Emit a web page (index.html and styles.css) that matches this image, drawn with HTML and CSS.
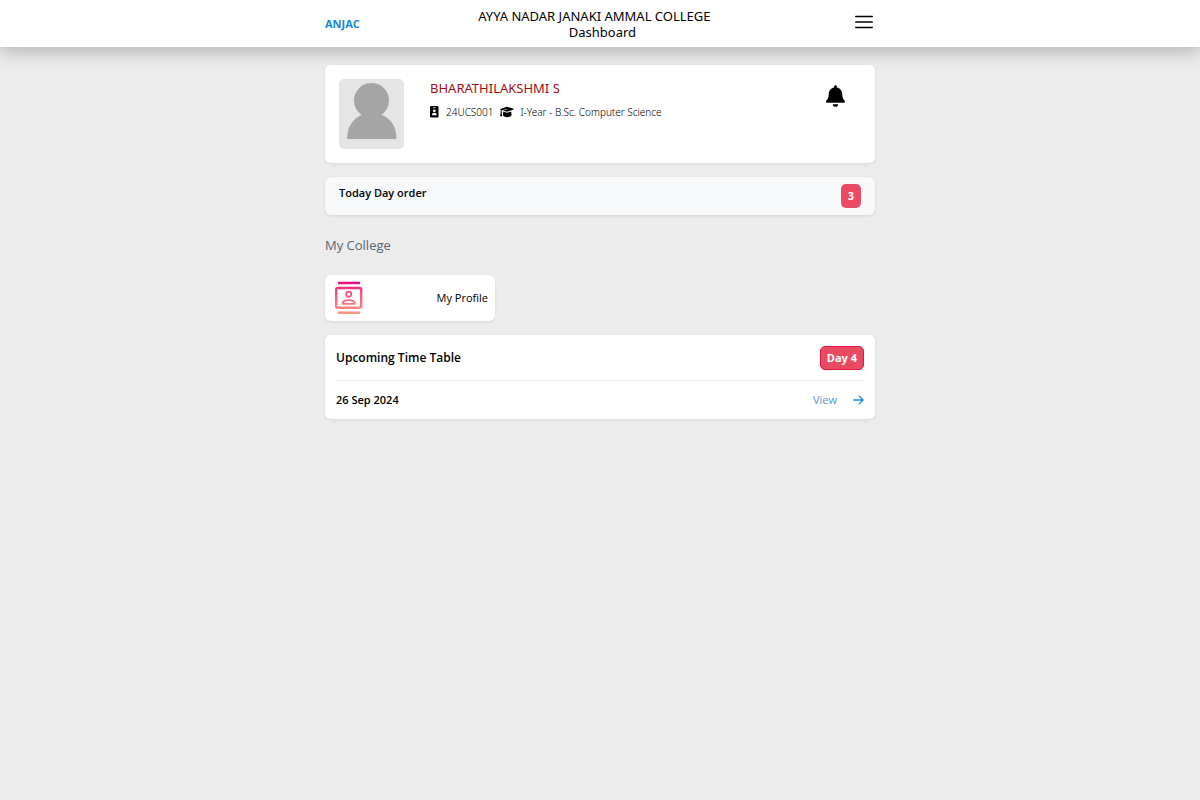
FILE: index.html
```
<!DOCTYPE html>
<html lang="en">
<head>
	<title>ANJAC - Dashboard</title>
	<meta charset="utf-8">
	<meta name="viewport" content="width=device-width, initial-scale=1">
	<link rel="stylesheet" href="styles.css">
</head>

<body>
	<header class="topbar">
		<div class="container topbar-inner">
			<a class="brand" href="#">ANJAC</a>
			<div class="title">
				<span class="college">AYYA NADAR JANAKI AMMAL COLLEGE</span>
				<span class="page">Dashboard</span>
			</div>
			<button class="icon-btn menu-btn" type="button" aria-label="Menu">
				<svg width="18" height="14" viewBox="0 0 18 14" stroke="#000" stroke-width="1.4" stroke-linecap="round">
					<path d="M.7 1.5h16.6M.7 7h16.6M.7 12.5h16.6"/>
				</svg>
			</button>
		</div>
	</header>

	<main class="container main">
		<section class="card profile">
			<svg class="avatar" width="65" height="70" viewBox="0 0 65 70">
				<rect width="65" height="70" rx="5" fill="#e5e5e5"/>
				<circle cx="32.5" cy="21.5" r="17.5" fill="#a5a5a5"/>
				<path d="M8 60C8 46 16 38 24 35.500h17.500C50 38 57.500 46 57.500 60z" fill="#a5a5a5"/>
			</svg>
			<div class="student">
				<h1 class="name">BHARATHILAKSHMI S</h1>
				<div class="meta">
					<svg width="9" height="12" viewBox="0 0 9 12">
						<rect width="8.500" height="11.500" rx="1.300"/>
						<path d="M3 1.700h2.600" stroke="#fff" stroke-width=".8"/>
						<circle cx="4.300" cy="4.800" r="1.400" fill="#fff"/>
						<path d="M1.800 9.200c0-3.300 5-3.300 5 0z" fill="#fff"/>
					</svg>
					<span class="regno">24UCS001</span>
					<svg class="cap" width="14" height="12" viewBox="0 0 14 12">
						<path d="M7 .8L13.500 2.800c.4.200.4.600 0 .8L8 5.500c-.7.200-1.300.200-2 0L3 4.600l3.800-1-.1-.5-4.600 1.200c-.4.300-.6.700-.6 1.200.5.400.5.900.1 1.200l.6 3c0 .3-.1.500-.4.500H.5c-.3 0-.4-.2-.4-.5l.6-3c-.4-.3-.4-.8 0-1.100 0-.5.100-.9.400-1.300L.4 3.700c-.5-.2-.5-.6 0-.8z"/>
						<path d="M3.200 5.600l2.700.8c.8.200 1.500.2 2.300 0l3-.9.400 3.600c0 1.300-2 2.100-4.300 2.100s-4.300-.8-4.300-2.100z"/>
					</svg>
					<span>I-Year - B.Sc. Computer Science</span>
				</div>
			</div>
			<button class="icon-btn bell" type="button" aria-label="Notifications">
				<svg width="19" height="22" viewBox="0 0 448 512">
					<path d="M224 512c35.300 0 63.900-28.600 63.900-64H160c0 35.400 28.600 64 64 64zm215.400-149.700c-19.300-20.800-55.500-52-55.500-154.300 0-77.700-54.500-139.900-127.900-155.200V32c0-17.700-14.300-32-32-32s-32 14.300-32 32v20.800C118.600 68.100 64.100 130.300 64.100 208c0 102.300-36.200 133.500-55.500 154.300C2.600 368.700 0 376.400 0 384c.1 16.400 13 32 32.100 32h383.800c19.100 0 32-15.600 32.100-32 0-7.600-2.700-15.300-8.600-21.700z"/>
					<path d="M145 432h158" stroke="#fff" stroke-width="24"/>
				</svg>
			</button>
		</section>

		<section class="card day-order">
			<span class="day-label">Today Day order</span>
			<span class="badge">3</span>
		</section>

		<h2 class="section-title">My College</h2>

		<a class="card tile" href="#">
			<svg width="28" height="34" viewBox="0 0 28 34" fill="none" stroke="url(#pink)" stroke-width="2">
				<defs>
					<linearGradient id="pink" gradientUnits="userSpaceOnUse" x1="0" y1="0" x2="0" y2="34">
						<stop offset="0" stop-color="#e9007f"/>
						<stop offset=".28" stop-color="#fb4380"/>
						<stop offset="1" stop-color="#ff9a84"/>
					</linearGradient>
				</defs>
				<path d="M3 .8h22v2.400H3zM3 30.600h22V33H3z" fill="url(#pink)" stroke="none"/>
				<rect x="1.200" y="7" width="25" height="19.800" rx="1.500" stroke-width="2.400"/>
				<circle cx="13.700" cy="13.300" r="2.600" stroke-width="1.700"/>
				<path d="M7.500 22.800c0-5 12.400-5 12.400 0z" stroke-width="1.700" stroke-linejoin="round"/>
			</svg>
			<span>My Profile</span>
		</a>

		<section class="card timetable">
			<div class="row heading">
				<h2 class="tt-title">Upcoming Time Table</h2>
				<span class="badge badge-day">Day 4</span>
			</div>
			<div class="row">
				<span class="date">26 Sep 2024</span>
				<a class="view" href="#">View
					<svg width="11" height="10" viewBox="0 0 11 10" fill="none" stroke="#1488d8" stroke-width="1.300" stroke-linecap="round" stroke-linejoin="round">
						<path d="M.8 5h9.200M6 .9L10.100 5 6 9.100"/>
					</svg>
				</a>
			</div>
		</section>
	</main>
</body>

</html>
```
FILE: styles.css
```
body {
	margin: 0;
	background: #ececec;
	color: #000;
	font-family: "Noto Sans", "Open Sans", sans-serif;
	font-size: 11px;
	line-height: 16px;
}

a {
	text-decoration: none;
}

h1, h2 {
	margin: 0;
}

svg {
	display: block;
	flex: none;
}

.container {
	box-sizing: border-box;
	width: 100%;
	max-width: 550px;
	margin: 0 auto;
}

.topbar {
	background: #fff;
	box-shadow: 0 6px 16px rgba(0, 0, 0, .22);
}

.topbar-inner {
	display: flex;
	align-items: center;
	min-height: 47px;
}

.brand {
	color: #1488d8;
	font-family: "Open Sans", "Noto Sans", sans-serif;
	font-weight: 700;
}

.title {
	display: flex;
	flex: 1;
	flex-direction: column;
	padding-right: 10px;
	font-size: 13px;
	text-align: center;
}

.college {
	padding-right: 16px;
}

.icon-btn {
	padding: 0;
	border: 0;
	background: none;
	cursor: pointer;
}

.menu-btn {
	padding: 0 2px 4px 0;
}

.main {
	padding-top: 18px;
}

.card {
	box-sizing: border-box;
	margin-bottom: 14px;
	border-radius: 6px;
	background: #fff;
	box-shadow: 0 1px 3px rgba(0, 0, 0, .1);
}

.profile {
	display: flex;
	align-items: flex-start;
	padding: 14px;
}

.student {
	flex: 1;
	padding-left: 26px;
}

.name {
	color: #a30d11;
	font-size: 13px;
	font-weight: 400;
	line-height: 18px;
}

.meta {
	display: flex;
	align-items: center;
	margin-top: 7px;
	font-size: 10px;
	font-weight: 300;
}

.regno {
	margin: 0 7px;
}

.cap {
	margin-right: 6px;
}

.bell {
	margin: 6px 16px 0 0;
}

.day-order {
	display: flex;
	align-items: flex-start;
	justify-content: space-between;
	padding: 7px 14px;
	background: #f8f9fb;
}

.day-label {
	padding-top: 1px;
	font-family: "Open Sans", "Noto Sans", sans-serif;
	font-weight: 600;
}

.badge {
	padding: 4px 7px;
	border-radius: 5px;
	background: #ea4b63;
	color: #fff;
	font-family: "Open Sans", "Noto Sans", sans-serif;
	font-weight: 700;
}

.section-title {
	margin: 20px 0;
	color: #56656f;
	font-family: "Open Sans", "Noto Sans", sans-serif;
	font-size: 13px;
	font-weight: 400;
	line-height: 20px;
}

.tile {
	display: flex;
	align-items: center;
	justify-content: space-between;
	width: 170px;
	padding: 6px 7px 6px 10px;
	color: #000;
	font-family: "Open Sans", "Noto Sans", sans-serif;
}

.timetable {
	padding: 0 11px;
	font-family: "Open Sans", "Noto Sans", sans-serif;
}

.row {
	display: flex;
	align-items: center;
	justify-content: space-between;
	min-height: 38px;
}

.heading {
	min-height: 45px;
	border-bottom: 1px solid #eee;
}

.tt-title {
	font-size: 12px;
	font-weight: 600;
}

.badge-day {
	padding: 3px 6px;
	border: 1px solid #e5143c;
}

.date {
	font-weight: 600;
}

.view {
	display: flex;
	align-items: center;
	gap: 16px;
	color: #5b93d3;
}
```
